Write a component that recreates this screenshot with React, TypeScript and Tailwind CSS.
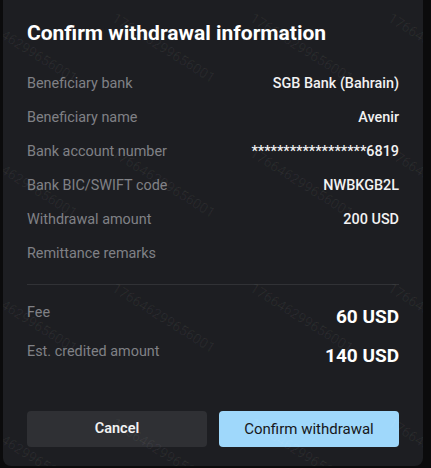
const rows = [
  { label: "Beneficiary bank", value: "SGB Bank (Bahrain)" },
  { label: "Beneficiary name", value: "Avenir" },
  { label: "Bank account number", value: "******************6819" },
  { label: "Bank BIC/SWIFT code", value: "NWBKGB2L" },
  { label: "Withdrawal amount", value: "200 USD" },
  { label: "Remittance remarks", value: "" },
]

function Watermark() {
  const marks = []
  for (let j = 0; j < 4; j++) {
    for (let i = 0; i < 4; i++) {
      marks.push({ x: -22 + 138 * i, y: 8 + 135 * j })
    }
  }
  return (
    <div className="pointer-events-none absolute inset-0 overflow-hidden">
      {marks.map((m, k) => (
        <span
          key={k}
          className="absolute origin-top-left rotate-[32deg] whitespace-nowrap text-[14px] text-white/[0.06]"
          style={{ left: m.x, top: m.y }}
        >
          176646299656001
        </span>
      ))}
    </div>
  )
}

export default function App() {
  return (
    <div className="h-[468px] w-[431px] overflow-hidden bg-[#0b0b0c] pl-[3px] font-['Roboto',sans-serif]">
      <div className="relative flex h-[466px] w-[420px] flex-col rounded-b-lg bg-[#1d1e22] px-6 pt-[19px]">
        <Watermark />

        <h2 className="text-[21px] font-bold leading-7 text-white">
          Confirm withdrawal information
        </h2>

        {/* details */}
        <div className="mt-5 flex flex-col">
          {rows.map((r) => (
            <div key={r.label} className="flex h-[34px] items-center justify-between text-[14.4px] leading-5">
              <span className="text-[#808186]">{r.label}</span>
              <span className="font-medium text-[#f2f2f2]">{r.value}</span>
            </div>
          ))}
        </div>

        <div className="mt-[13px] h-px bg-[#313236]" />

        {/* totals */}
        <div className="mt-[18px] flex flex-col gap-[11px]">
          <div className="flex items-start justify-between">
            <span className="text-[14.4px] leading-5 text-[#808186]">Fee</span>
            <span className="text-[19px] font-bold leading-7 text-white">60 USD</span>
          </div>
          <div className="flex items-start justify-between">
            <span className="text-[14.4px] leading-5 text-[#808186]">Est. credited amount</span>
            <span className="text-[19px] font-bold leading-7 text-white">140 USD</span>
          </div>
        </div>

        <div className="mt-[41px] flex gap-3">
          <button className="h-9 flex-1 rounded bg-[#2f3034] text-[14.5px] font-semibold text-[#f2f2f2]">
            Cancel
          </button>
          <button className="h-9 flex-1 rounded bg-[#9fd8fb] text-[15px] text-[#16171a]">
            Confirm withdrawal
          </button>
        </div>
      </div>
    </div>
  )
}
